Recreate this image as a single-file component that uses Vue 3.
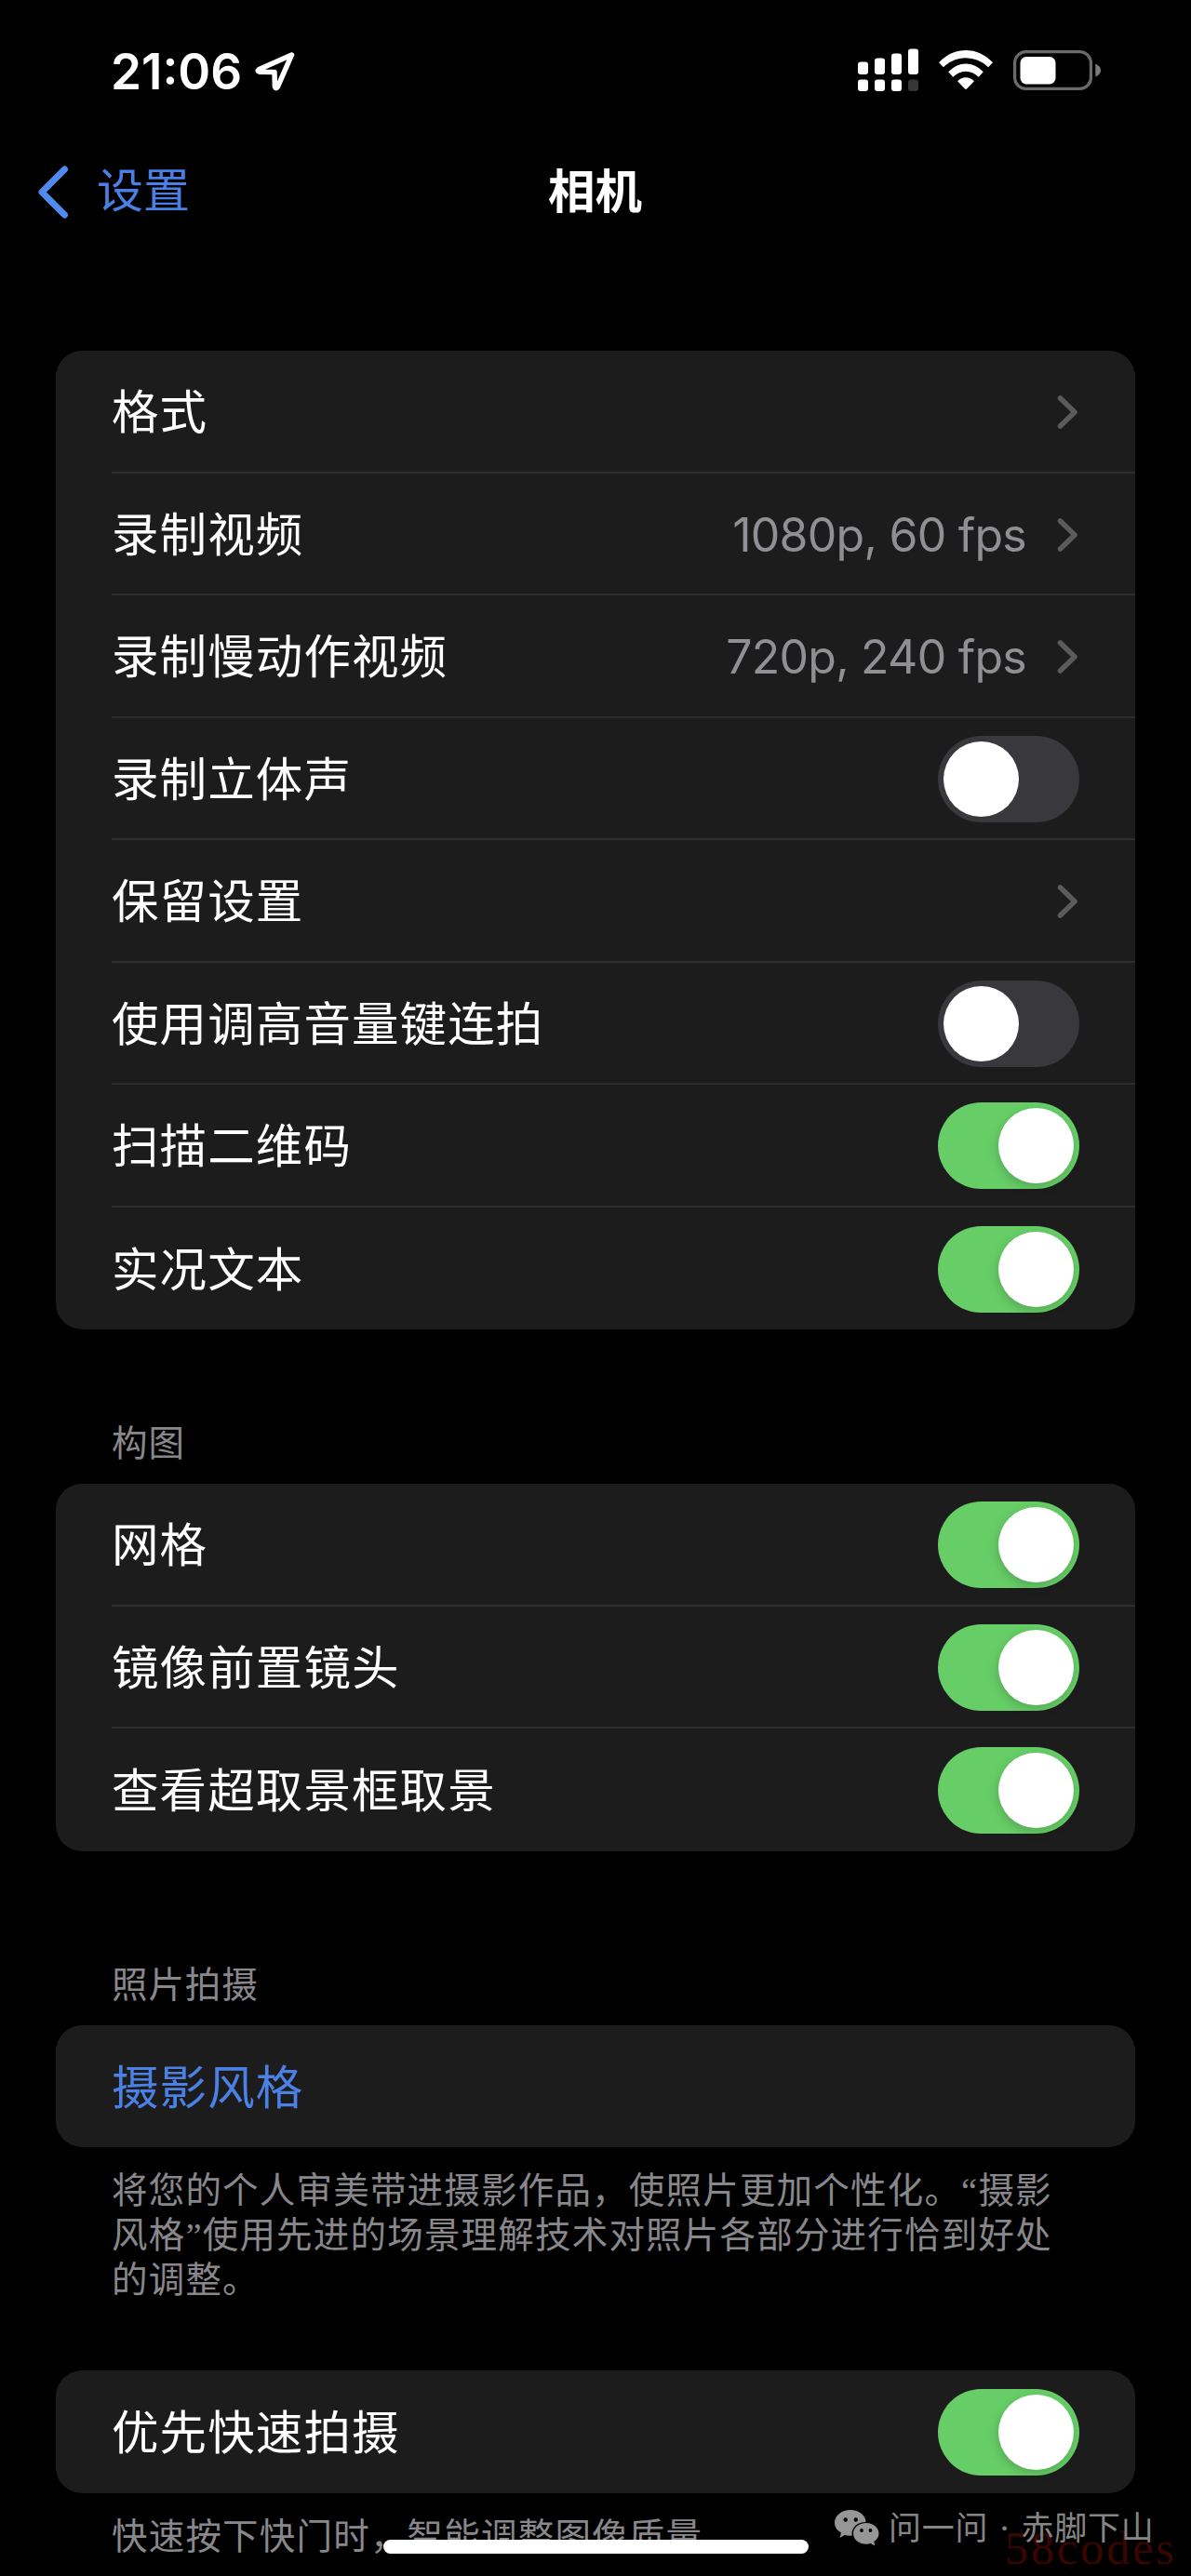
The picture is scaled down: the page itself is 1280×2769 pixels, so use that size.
<script setup>
const groups = [
  {
    key: 'general',
    rows: [
      { label: '格式', type: 'link' },
      { label: '录制视频', type: 'link', value: '1080p, 60 fps' },
      { label: '录制慢动作视频', type: 'link', value: '720p, 240 fps' },
      { label: '录制立体声', type: 'switch', on: false },
      { label: '保留设置', type: 'link' },
      { label: '使用调高音量键连拍', type: 'switch', on: false },
      { label: '扫描二维码', type: 'switch', on: true },
      { label: '实况文本', type: 'switch', on: true },
    ],
  },
  {
    key: 'composition',
    header: '构图',
    rows: [
      { label: '网格', type: 'switch', on: true },
      { label: '镜像前置镜头', type: 'switch', on: true },
      { label: '查看超取景框取景', type: 'switch', on: true },
    ],
  },
  {
    key: 'capture',
    header: '照片拍摄',
    rows: [{ label: '摄影风格', type: 'action' }],
    footer: ['将您的个人审美带进摄影作品，使照片更加个性化。“摄影', '风格”使用先进的场景理解技术对照片各部分进行恰到好处', '的调整。'],
  },
  {
    key: 'fast',
    rows: [{ label: '优先快速拍摄', type: 'switch', on: true }],
    footer: ['快速按下快门时，智能调整图像质量'],
  },
]
</script>

<template>
  <div class="screen">
    <header class="status">
      <div class="status-left">
        <span class="time">21:06</span>
        <svg class="location" width="46" height="46" viewBox="0 0 46 46">
          <path d="M40.500 5 L5 20.800 Q3 22.400 5.600 23.200 L22 23.600 L22.400 39.400 Q23.600 42 25.400 39.400 Z" />
        </svg>
      </div>
      <div class="status-right">
        <svg width="65" height="46" viewBox="0 0 65 46">
          <g fill="#fff">
            <rect x="0" y="14.5" width="11" height="13.5" rx="3" />
            <rect x="18" y="10.5" width="11" height="17.5" rx="3" />
            <rect x="36" y="5.5" width="11" height="22.5" rx="3" />
            <rect x="54" y="0.5" width="11" height="27.5" rx="3" />
            <rect x="0" y="33.5" width="11" height="12.5" rx="3" />
            <rect x="18" y="33.5" width="11" height="12.5" rx="3" />
            <rect x="36" y="33.5" width="11" height="12.5" rx="3" />
          </g>
          <rect x="54" y="33.5" width="11" height="12.5" rx="3" fill="#363636" />
        </svg>
        <svg class="wifi" width="58" height="42" viewBox="0 0 58 42" fill="#fff">
          <path d="M0 13 Q12.5 0 29 0 Q45.500 0 58 13 L53.200 18.300 Q42.500 8.300 29 8.300 Q15.500 8.300 4.800 18.300 Z" />
          <path d="M10.200 23.300 Q18.500 14.600 29 14.600 Q39.500 14.600 47.800 23.300 L42.800 28.700 Q36.500 22.700 29 22.700 Q21.500 22.700 15.200 28.700 Z" />
          <path d="M20 33.300 Q24 29.200 29 29.200 Q34 29.200 38 33.300 L30 41.500 Q29 42.300 28 41.500 Z" />
        </svg>
        <svg class="battery" width="95" height="43" viewBox="0 0 95 43">
          <rect x="1.600" y="1.600" width="81.800" height="39.800" rx="12" fill="none" stroke="#6a6a6a" stroke-width="3.200" />
          <rect x="7.500" y="7" width="38" height="29.500" rx="6.500" fill="#fff" />
          <path d="M88.300 14.500 Q94 17 94 21.500 Q94 26 88.300 28.500 Z" fill="#7b7b7b" />
        </svg>
      </div>
    </header>

    <nav class="navbar">
      <div class="back">
        <svg width="34" height="57" viewBox="0 0 34 57">
          <path d="M29.500 4 L5 28.500 L29.500 53" />
        </svg>
        <span>设置</span>
      </div>
      <h1>相机</h1>
      <div></div>
    </nav>

    <main>
      <section v-for="g in groups" :key="g.key" :class="['group', g.key]">
        <h2 v-if="g.header">{{ g.header }}</h2>
        <div class="card">
          <div v-for="row in g.rows" :key="row.label" class="row">
            <span :class="['label', { action: row.type === 'action' }]">{{ row.label }}</span>
            <span v-if="row.value" class="value">{{ row.value }}</span>
            <svg v-if="row.type === 'link'" class="chevron" width="24" height="38" viewBox="0 0 24 38">
              <path d="M3.500 4 L19 19 L3.500 34" />
            </svg>
            <span v-if="row.type === 'switch'" :class="['switch', { on: row.on }]"><i></i></span>
          </div>
        </div>
        <p v-if="g.footer" class="footer">
          <span v-for="line in g.footer" :key="line">{{ line }}</span>
        </p>
      </section>
    </main>

    <div class="home-indicator"></div>
    <div class="stamp">58codes</div>
    <div class="credit">
      <svg width="48" height="39" viewBox="0 0 48 39">
        <path fill="#969696" d="M17 0 C26 0 33.500 5.600 33.500 13 C25 13 18.500 18.300 18.500 25.500 L18.700 27.500 Q14.500 28 11 26.800 L5.500 30 L7 24.500 Q0 20.500 0 14 C0 6 7.500 0 17 0 Z" />
        <path fill="#969696" d="M34 14 C41.500 14 47.500 19 47.500 25.300 Q47.500 30.500 42.300 34 L43.500 38.500 L38.800 36 Q36.500 36.700 34 36.700 C26 36.700 20 31.700 20 25.300 C20 19 26 14 34 14 Z" />
        <g fill="#000">
          <circle cx="11.700" cy="10.500" r="2.200" /><circle cx="22.800" cy="10.500" r="2.200" />
          <circle cx="29" cy="22" r="1.900" /><circle cx="38.500" cy="22" r="1.900" />
        </g>
      </svg>
      <span>问一问</span><span class="dot">·</span><span>赤脚下山</span>
    </div>
  </div>
</template>

<style>
body {
  margin: 0;
  background: #000;
}
</style>

<style scoped>
.screen {
  position: relative;
  width: 1280px;
  height: 2769px;
  overflow: hidden;
  background: #000;
  color: #fff;
  font-family: Inter, "Noto Sans CJK SC", sans-serif;
}
.status {
  display: flex;
  justify-content: space-between;
  height: 154px;
  padding: 52px 96px 0 119px;
  box-sizing: border-box;
}
.status-left,
.status-right {
  display: flex;
  align-items: flex-start;
}
.time {
  width: 154px;
  font-size: 53px;
  line-height: 50px;
  font-weight: 600;
}
.location {
  margin-top: 2px;
}
.location path {
  fill: none;
  stroke: #fff;
  stroke-width: 5.500;
  stroke-linejoin: round;
}
.wifi {
  margin: 2px 22px 0;
}
.battery {
  margin-top: 2px;
}
.navbar {
  display: grid;
  grid-template-columns: 1fr auto 1fr;
  align-items: center;
  height: 104px;
  padding: 0 41px 0 40px;
}
.back {
  display: flex;
  align-items: center;
  gap: 30px;
  color: #4a7fe6;
  font-size: 50px;
  line-height: 57px;
}
.back span {
  padding-bottom: 1px;
}
.back path {
  fill: none;
  stroke: #4f8bee;
  stroke-width: 7;
  stroke-linecap: round;
  stroke-linejoin: round;
}
.navbar h1 {
  margin: 0;
  font-size: 50.500px;
  line-height: 70px;
  font-weight: 600;
}
.group {
  padding: 0 60px;
}
.general {
  margin-top: 119px;
}
.group h2 {
  margin: 0;
  padding-left: 60px;
  font-size: 38.500px;
  line-height: 48px;
  font-weight: 400;
  letter-spacing: 0.9px;
  color: #88888c;
}
.composition {
  margin-top: 98px;
}
.composition .card {
  margin-top: 20px;
}
.capture {
  margin-top: 119px;
}
.capture .card {
  margin-top: 20px;
}
.fast {
  margin-top: 73px;
}
.card {
  overflow: hidden;
  border-radius: 28px;
  background: #1c1c1d;
}
.row {
  display: flex;
  align-items: center;
  height: 131.500px;
  margin-left: 60px;
  padding: 3px 60px 0 0;
  box-sizing: border-box;
}
.row:not(:last-child) {
  border-bottom: 2px solid #2d2d2f;
}
.label {
  flex: 1;
  font-size: 50.500px;
  letter-spacing: 1.100px;
  line-height: 70px;
  white-space: nowrap;
}
.action {
  color: #4b80e4;
}
.value {
  margin-right: 33px;
  color: #8f8f94;
  font-size: 50px;
  line-height: 60px;
  letter-spacing: -0.750px;
}
.chevron path {
  fill: none;
  stroke: #5b5b5e;
  stroke-width: 5.500;
  stroke-linecap: round;
  stroke-linejoin: round;
}
.switch {
  display: flex;
  width: 152px;
  height: 93px;
  margin-bottom: 1px;
  padding: 6px;
  box-sizing: border-box;
  border-radius: 47px;
  background: #39393d;
}
.switch i {
  width: 81px;
  height: 81px;
  border-radius: 50%;
  background: #fff;
}
.switch.on {
  justify-content: flex-end;
  background: #67ce67;
}
.switch.on i {
  box-shadow: -1px 4px 12px rgba(0, 0, 0, 0.18);
}
.footer {
  display: flex;
  flex-direction: column;
  margin: 23px 0 0;
  padding-left: 60px;
  color: #88888c;
  font-family: "Liberation Serif", "Noto Sans CJK SC", sans-serif;
  font-size: 38.500px;
  line-height: 48px;
  letter-spacing: 1.200px;
  white-space: nowrap;
}
.home-indicator {
  position: absolute;
  left: 412px;
  top: 2730px;
  width: 457px;
  height: 15px;
  border-radius: 8px;
  background: #fff;
}
.credit {
  position: absolute;
  left: 897px;
  top: 2692px;
  display: flex;
  align-items: center;
  height: 50px;
  color: #858585;
  font-size: 35px;
  letter-spacing: 0.800px;
  line-height: 50px;
  white-space: nowrap;
}
.credit svg {
  margin-right: 10px;
}
.dot {
  width: 35px;
  text-align: center;
}
.stamp {
  position: absolute;
  left: 1080px;
  top: 2710px;
  color: #3a0503;
  font-family: "Liberation Serif", serif;
  font-size: 51px;
  line-height: 58px;
  letter-spacing: 2.500px;
}
</style>
